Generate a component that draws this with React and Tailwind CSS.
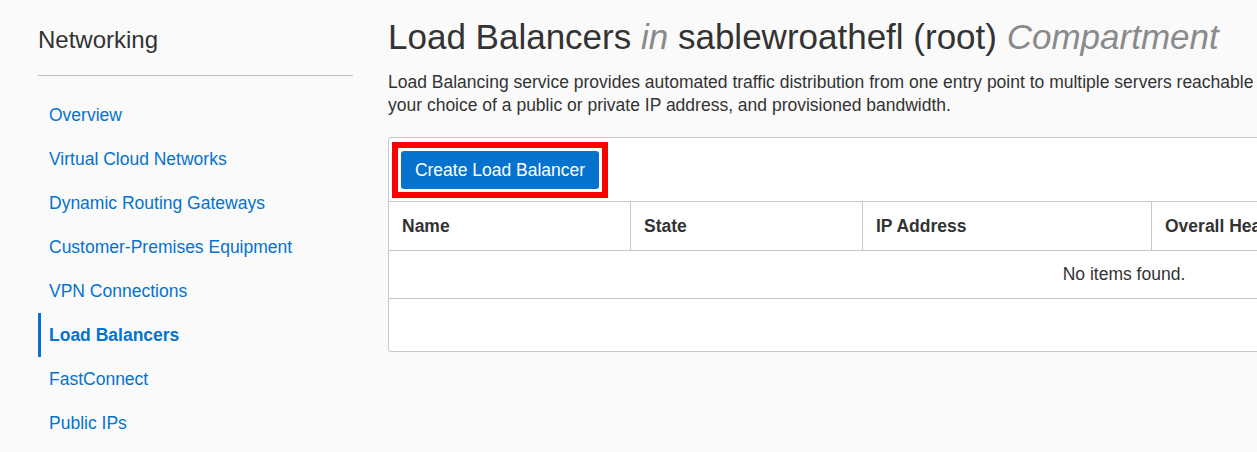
import React from 'react';

const navItems = [
  'Overview',
  'Virtual Cloud Networks',
  'Dynamic Routing Gateways',
  'Customer-Premises Equipment',
  'VPN Connections',
  'Load Balancers',
  'FastConnect',
  'Public IPs',
];

const columns = [
  { label: 'Name', width: 'w-[241px]' },
  { label: 'State', width: 'w-[232px]' },
  { label: 'IP Address', width: 'w-[289px]' },
  { label: 'Overall Health', width: 'w-[240px]' },
  { label: 'Shape', width: 'w-[200px]' },
  { label: 'Created', width: 'flex-1' },
];

const App = () => {
  const active = 'Load Balancers';

  return (
    <div className="w-[1257px] h-[452px] overflow-hidden bg-[#fafafa] flex font-['Liberation_Sans',Arial,sans-serif] text-[#333]">
      {/* Sidebar */}
      <aside className="w-[315px] ml-[38px] shrink-0">
        <h2 className="text-[24px] leading-[30px] pt-[25px] text-[#333]">Networking</h2>
        <div className="mt-[20px] border-t border-[#b9bcc3]" />
        <ul className="mt-[17px]">
          {navItems.map((item) => (
            <li
              key={item}
              className={`h-[44px] flex items-center text-[17.5px] text-[#0572ce] ${
                item === active ? 'font-bold border-l-[3px] border-[#0572ce] pl-[8px]' : 'pl-[11px]'
              }`}
            >
              {item}
            </li>
          ))}
        </ul>
      </aside>

      {/* Main */}
      <main className="ml-[35px] shrink-0 w-[1472px]">
        <h1 className="text-[35px] leading-[42px] pt-[16px] whitespace-nowrap">
          Load Balancers <span className="italic text-[#8a8a8a]">in</span> sablewroathefl (root){' '}
          <span className="italic text-[#8a8a8a]">Compartment</span>
        </h1>
        <p className="mt-[13px] text-[17.5px] leading-[23px] whitespace-nowrap">
          Load Balancing service provides automated traffic distribution from one entry point to multiple servers reachable from your virtual cloud network (VCN). The service offers a load balancer with
          <br />
          your choice of a public or private IP address, and provisioned bandwidth.
        </p>

        <div className="mt-[20px] bg-white border border-[#c4c7cd] rounded-[3px]">
          {/* Toolbar */}
          <div className="h-[63px] pl-[3px] pt-[4px]">
            <div className="inline-block border-[6px] border-[#ff0000] p-[3px]">
              <button className="h-[38px] w-[198px] bg-[#0572ce] text-white text-[17.5px] rounded-[3px]">
                Create Load Balancer
              </button>
            </div>
          </div>

          {/* Header */}
          <div className="flex border-t border-b border-[#c4c7cd] h-[50px]">
            {columns.map((col, i) => (
              <div
                key={col.label}
                className={`${col.width} flex items-center px-[13px] font-bold text-[17.5px] whitespace-nowrap ${
                  i > 0 ? 'border-l border-[#c4c7cd]' : ''
                }`}
              >
                {col.label}
              </div>
            ))}
          </div>

          {/* Empty row */}
          <div className="h-[48px] flex items-center justify-center text-[17.5px] border-b border-[#c4c7cd]">
            No items found.
          </div>

          {/* Footer */}
          <div className="h-[52px]" />
        </div>
      </main>
    </div>
  );
};

export default App;
